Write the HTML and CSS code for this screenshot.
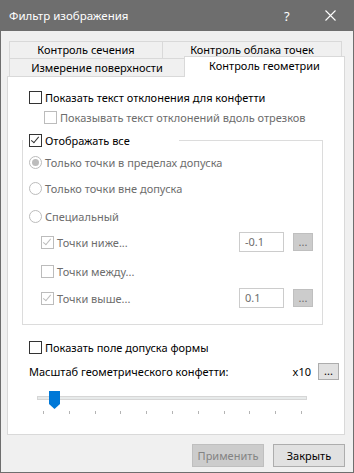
FILE: index.html
```html
<!DOCTYPE html>
<html lang="ru">
<head>
    <meta charset="UTF-8">
    <title>Фильтр изображения</title>
    <link rel="stylesheet" href="styles.css">
</head>
<body>
    <div class="window">
        <div class="titlebar">
            <span class="title">Фильтр изображения</span>
            <span class="help">?</span>
            <svg class="close" width="11" height="11" viewBox="0 0 11 11">
                <path d="M0.5 0.5 L10.5 10.5 M10.5 0.5 L0.5 10.5" stroke="#fff" stroke-width="1.1" fill="none"/>
            </svg>
        </div>

        <div class="client">
            <div class="tabs">
                <div class="tab-row">
                    <div class="tab tab-a">Контроль сечения</div>
                    <div class="tab tab-b">Контроль облака точек</div>
                </div>
                <div class="tab-row front">
                    <div class="tab tab-c">Измерение поверхности</div>
                    <div class="tab active">Контроль геометрии</div>
                </div>
            </div>

            <div class="panel">
                <div class="row row-first">
                    <span class="check"></span>
                    <span class="label">Показать текст отклонения для конфетти</span>
                </div>
                <div class="row row-sub disabled">
                    <span class="check"></span>
                    <span class="label">Показывать текст отклонений вдоль отрезков</span>
                </div>

                <fieldset class="group">
                    <legend class="legend">
                        <span class="check checked"></span>
                        <span class="label">Отображать все</span>
                    </legend>

                    <div class="grow g1 disabled">
                        <span class="radio selected"></span>
                        <span class="label">Только точки в пределах допуска</span>
                    </div>
                    <div class="grow g2 disabled">
                        <span class="radio"></span>
                        <span class="label">Только точки вне допуска</span>
                    </div>
                    <div class="grow g3 disabled">
                        <span class="radio"></span>
                        <span class="label">Специальный</span>
                    </div>
                    <div class="grow sub g4 disabled">
                        <span class="check checked"></span>
                        <span class="label">Точки ниже...</span>
                        <span class="field">-0.1</span>
                        <span class="dots">...</span>
                    </div>
                    <div class="grow sub g5 disabled">
                        <span class="check"></span>
                        <span class="label">Точки между...</span>
                    </div>
                    <div class="grow sub g6 disabled">
                        <span class="check checked"></span>
                        <span class="label">Точки выше...</span>
                        <span class="field">0.1</span>
                        <span class="dots">...</span>
                    </div>
                </fieldset>

                <div class="row row-shape">
                    <span class="check"></span>
                    <span class="label">Показать поле допуска формы</span>
                </div>
                <div class="row row-scale">
                    <span class="label">Масштаб геометрического конфетти:</span>
                    <span class="factor">x10</span>
                    <span class="dots enabled">...</span>
                </div>

                <div class="slider">
                    <div class="track"></div>
                    <svg class="thumb" width="11" height="18" viewBox="0 0 11 18">
                        <path d="M0 0 H11 V13 L5.5 18 L0 13 Z" fill="#0078d7"/>
                    </svg>
                    <div class="ticks">
                        <i></i><i></i><i></i><i></i><i></i><i></i><i></i><i></i><i></i><i></i><i></i>
                    </div>
                </div>
            </div>

            <div class="buttons">
                <span class="button off">Применить</span>
                <span class="button">Закрыть</span>
            </div>
        </div>
    </div>
</body>
</html>
```

FILE: styles.css
```css
body {
    margin: 0;
    font-family: "Noto Sans", "Liberation Sans", sans-serif;
    font-size: 11px;
    color: #000;
    background: #f0f0f0;
}

.window {
    width: 354px;
    height: 473px;
    box-sizing: border-box;
    border: 1px solid #6e6e6e;
    border-top: none;
    background: #f0f0f0;
    display: flex;
    flex-direction: column;
}

.titlebar {
    height: 31px;
    background: #6e6e6e;
    color: #fff;
    display: flex;
    align-items: center;
    padding-left: 9px;
    margin: 0 -1px;
}

.title {
    flex: 1;
    font-size: 11.5px;
}

.help {
    width: 12px;
    margin-right: 29px;
    font-size: 13px;
}

.close {
    margin-right: 18px;
}

.client {
    flex: 1;
    padding: 10px 8px 0 6px;
}

/* tabs */
.tab-row {
    display: flex;
    align-items: flex-start;
    padding-left: 2px;
}

.tab {
    box-sizing: border-box;
    height: 18px;
    border: 1px solid #d9d9d9;
    background: #f0f0f0;
    display: flex;
    align-items: center;
    justify-content: center;
    line-height: 14px;
}

.tab-a {
    width: 154px;
}

.tab-b {
    width: 180px;
    margin-left: -1px;
}

.front {
    margin-top: -1px;
}

.tab-c {
    width: 176px;
    border-bottom: none;
}

.tab.active {
    width: 161px;
    height: 21px;
    margin: -2px 0 -1px -1px;
    background: #fff;
    border-bottom: none;
    position: relative;
    z-index: 1;
    padding-bottom: 3px;
}

/* panel */
.panel {
    box-sizing: border-box;
    width: 338px;
    height: 359px;
    background: #fff;
    border: 1px solid #d9d9d9;
    padding: 10px 0 0 14px;
}

.row {
    display: flex;
    align-items: center;
    height: 20px;
    padding-left: 7px;
}

.row-sub {
    padding-left: 22px;
}

.check {
    box-sizing: border-box;
    width: 13px;
    height: 13px;
    border: 1px solid #333;
    background: #fff;
    margin-right: 3px;
    flex: none;
    position: relative;
}

.check.checked::after {
    content: "";
    position: absolute;
    left: 3px;
    top: 0;
    width: 3px;
    height: 7px;
    border: solid #333;
    border-width: 0 1.2px 1.2px 0;
    transform: rotate(40deg);
}

.disabled .label,
.disabled .field,
.disabled .dots {
    color: #6d6d6d;
}

.disabled .check {
    border-color: #bcbcbc;
}

.disabled .check.checked::after {
    border-color: #bcbcbc;
}

.radio {
    box-sizing: border-box;
    width: 13px;
    height: 13px;
    border: 1px solid #bcbcbc;
    border-radius: 50%;
    background: #fff;
    margin-right: 3px;
    flex: none;
    display: flex;
    align-items: center;
    justify-content: center;
}

.radio.selected::after {
    content: "";
    width: 7px;
    height: 7px;
    border-radius: 50%;
    background: #bcbcbc;
}

/* group box */
.group {
    box-sizing: border-box;
    width: 301px;
    margin: 3px 0 0;
    padding: 0 0 16px;
    border: 1px solid #dcdcdc;
    min-inline-size: 0;
}

.legend {
    box-sizing: border-box;
    width: 156px;
    height: 20px;
    padding: 0 0 0 6px;
    display: flex;
    align-items: center;
}

.grow {
    display: flex;
    align-items: center;
    padding-left: 6px;
}

.g1 { height: 24px; }
.g2 { height: 28px; }
.g3 { height: 28px; }
.g4 { height: 24px; }
.g5 { height: 34px; }
.g6 { height: 20px; }

.grow.sub {
    padding-left: 18px;
}

.grow .label {
    flex: 1;
}

.field {
    box-sizing: border-box;
    width: 45px;
    height: 20px;
    border: 1px solid #cccccc;
    background: #fff;
    padding-left: 5px;
    line-height: 18px;
    margin-right: 9px;
}

.dots {
    box-sizing: border-box;
    width: 20px;
    height: 18px;
    background: #cccccc;
    border: 1px solid #bfbfbf;
    display: flex;
    justify-content: center;
    align-items: center;
    margin-right: 9px;
    font-size: 11px;
    line-height: 1;
    padding-bottom: 2px;
}

.row-shape {
    margin-top: 12px;
}

.row-scale {
    margin-top: 4px;
}

.row-scale .label {
    flex: 1;
}

.factor {
    margin-right: 7px;
}

.dots.enabled {
    width: 21px;
    height: 17px;
    background: #e1e1e1;
    border-color: #adadad;
    color: #000;
    margin-right: 5px;
}

/* slider */
.slider {
    position: relative;
    width: 270px;
    margin: 7px 0 0 15px;
    padding-top: 8px;
}

.track {
    box-sizing: border-box;
    height: 4px;
    background: #e7eaea;
    border: 1px solid #d6d6d6;
}

.thumb {
    position: absolute;
    left: 12px;
    top: 3px;
}

.ticks {
    display: flex;
    justify-content: space-between;
    margin: 11px 5px 0 6px;
}

.ticks i {
    width: 1px;
    height: 3px;
    background: #b4b4b4;
}

/* dialog buttons */
.buttons {
    display: flex;
    justify-content: flex-end;
    gap: 9px;
    margin-top: 9px;
}

.button {
    box-sizing: border-box;
    width: 72px;
    height: 23px;
    background: #e1e1e1;
    border: 1px solid #adadad;
    display: flex;
    align-items: center;
    justify-content: center;
}

.button.off {
    background: #cccccc;
    border-color: #bfbfbf;
    color: #838383;
}
```
